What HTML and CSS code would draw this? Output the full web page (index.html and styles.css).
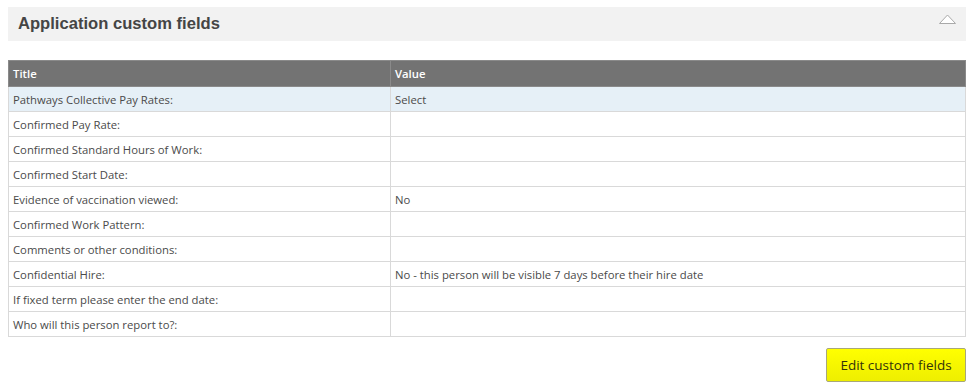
FILE: index.html
```html
<!DOCTYPE html>
<html lang="en">
<head>
<meta charset="UTF-8" />
<meta name="viewport" content="width=device-width, initial-scale=1.0" />
<title>Application custom fields</title>
<link rel="stylesheet" href="styles.css">
</head>
<body>
<div class="panel">
  <div class="panel-head">
    <h2>Application custom fields</h2>
    <svg class="toggle" width="17" height="10" viewBox="0 0 17 10">
      <path d="M0.5 9.5 L8.5 1 L16.5 9.5 Z" fill="#fff" stroke="#a9a9a9" stroke-width="1" />
    </svg>
  </div>
  <table class="fields">
    <thead>
      <tr><th>Title</th><th>Value</th></tr>
    </thead>
    <tbody>
      <tr class="hl"><td>Pathways Collective Pay Rates:</td><td>Select</td></tr>
      <tr><td>Confirmed Pay Rate:</td><td></td></tr>
      <tr><td>Confirmed Standard Hours of Work:</td><td></td></tr>
      <tr><td>Confirmed Start Date:</td><td></td></tr>
      <tr><td>Evidence of vaccination viewed:</td><td>No</td></tr>
      <tr><td>Confirmed Work Pattern:</td><td></td></tr>
      <tr><td>Comments or other conditions:</td><td></td></tr>
      <tr><td>Confidential Hire:</td><td>No - this person will be visible 7 days before their hire date</td></tr>
      <tr><td>If fixed term please enter the end date:</td><td></td></tr>
      <tr><td>Who will this person report to?:</td><td></td></tr>
    </tbody>
  </table>
  <div class="actions">
    <button class="btn-edit">Edit custom fields</button>
  </div>
</div>
</body>
</html>
```

FILE: styles.css
```css
body {
  margin: 7px 7px 0 8px;
  font-family: "Open Sans", "Noto Sans", sans-serif;
  background-color: #fff;
  color: #444;
}
.panel-head {
  display: flex;
  justify-content: space-between;
  align-items: flex-start;
  height: 34px;
  background-color: #f2f2f2;
  padding: 0 10px 0 10px;
}
.panel-head h2 {
  margin: 0;
  padding-top: 7px;
  font-family: "Liberation Sans", Arial, sans-serif;
  font-size: 16.6px;
  font-weight: bold;
  color: #454545;
}
.toggle {
  margin-top: 7px;
}
.fields {
  width: 100%;
  margin-top: 19px;
  border-collapse: collapse;
  font-size: 11.3px;
}
.fields th {
  background-color: #737373;
  color: #fff;
  font-weight: 600;
  text-align: left;
  height: 25px;
  padding: 0 4px;
  border: 1px solid #8a8a8a;
}
.fields td {
  height: 24px;
  padding: 0 4px;
  border: 1px solid #d9d9d9;
  color: #4a4a4a;
}
.fields th:first-child,
.fields td:first-child {
  width: 373px;
}
.fields tr.hl td {
  background-color: #e6f0f7;
}
.actions {
  display: flex;
  justify-content: flex-end;
  margin-top: 11px;
}
.btn-edit {
  width: 140px;
  height: 34px;
  font-family: "Open Sans", "Noto Sans", sans-serif;
  font-size: 13.5px;
  color: #33330a;
  background: linear-gradient(#ffff00, #eeee00);
  border: 1px solid #a8a878;
  border-radius: 2px;
  cursor: pointer;
}
```
